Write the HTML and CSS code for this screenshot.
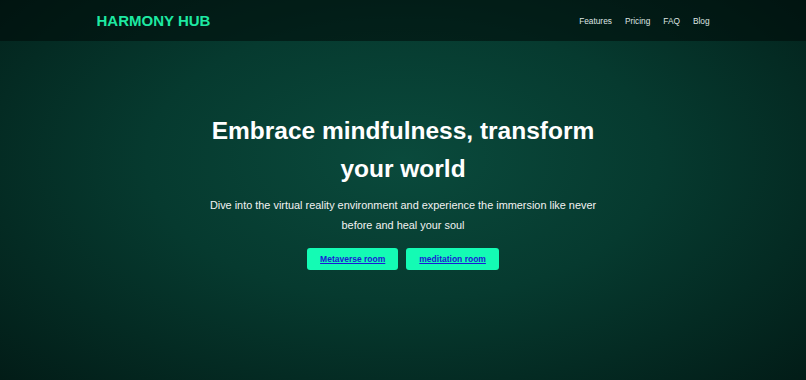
FILE: index.html
```html
<!DOCTYPE html>
<html lang="en">
<head>
<meta charset="utf-8">
<title>Harmony Hub</title>
<link rel="stylesheet" href="styles.css">
</head>
<body>
<header class="topbar">
  <div class="container bar">
    <div class="logo">HARMONY HUB</div>
    <nav class="nav">
      <a href="#">Features</a>
      <a href="#">Pricing</a>
      <a href="#">FAQ</a>
      <a href="#">Blog</a>
    </nav>
  </div>
</header>
<main class="hero">
  <h1 class="title">Embrace mindfulness, transform your world</h1>
  <p class="lead">Dive into the virtual reality environment and experience the immersion like never before and heal your soul</p>
  <div class="actions">
    <button class="btn"><a href="#">Metaverse room</a></button>
    <button class="btn"><a href="#">meditation room</a></button>
  </div>
</main>
</body>
</html>
```
FILE: styles.css
```css
* { box-sizing: border-box; }
html, body { margin: 0; height: 100%; }
body {
  font-family: "Liberation Sans", Arial, sans-serif;
  background: radial-gradient(ellipse at 50% 42%, #0a4a3c 0%, #063a2f 45%, #021c17 100%);
  color: #fff;
  min-height: 380px;
}
.topbar {
  background: rgba(0, 10, 8, 0.55);
  height: 41px;
}
.container {
  width: 613px;
  margin: 0 auto;
}
.bar {
  height: 41px;
  display: flex;
  align-items: center;
  justify-content: space-between;
}
.logo {
  color: #1de9a2;
  font-weight: bold;
  font-size: 15px;
}
.nav {
  display: flex;
  gap: 13px;
}
.nav a {
  color: #dfe5e3;
  text-decoration: none;
  font-size: 8.3px;
}
.hero {
  display: flex;
  flex-direction: column;
  align-items: center;
  text-align: center;
  padding-top: 71px;
}
.title {
  margin: 0;
  width: 420px;
  font-size: 24.5px;
  line-height: 38px;
  font-weight: bold;
}
.lead {
  margin: 7px 0 0;
  width: 400px;
  font-size: 10.9px;
  line-height: 20px;
  color: #f2f2f2;
}
.actions {
  display: flex;
  gap: 8px;
  margin-top: 13px;
}
.btn {
  background: #14fbb4;
  border: none;
  border-radius: 3px;
  height: 22px;
  padding: 0 13px;
  font-family: inherit;
  font-size: 8.5px;
  font-weight: bold;
}
.btn a { color: #1a1ad6; }
```
